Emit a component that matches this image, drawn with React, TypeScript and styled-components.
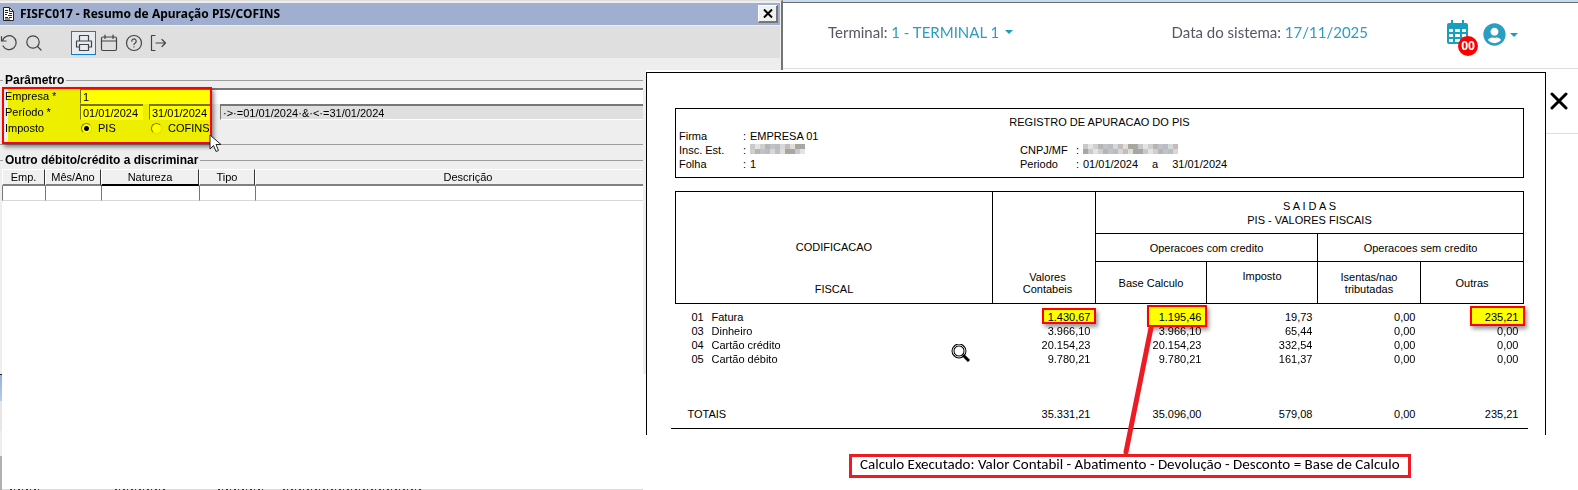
import React from "react";
import styled, { createGlobalStyle } from "styled-components";
import { FaUserCircle } from "react-icons/fa";

const Global = createGlobalStyle`
  *, *::before, *::after { box-sizing: border-box; }
  body { margin: 0; background: #fff; font: 11px/14px "Liberation Sans", Arial, sans-serif; color: #000; }
  button, input { font: inherit; color: inherit; margin: 0; }
  button { padding: 0; border: 0; background: none; cursor: pointer; }
`;

const Desktop = styled.main`
  position: relative;
  display: grid;
  grid-template-columns: minmax(0, 643fr) minmax(0, 140fr) minmax(0, 795fr);
  grid-template-rows: 70px 1fr;
  min-height: 100vh;
  overflow: hidden;
`;

/* Legacy window */
const WindowTop = styled.header`
  grid-column: 1 / 3;
  background: #eee;
  border-top: 1px solid #dedede;
  border-right: 2px solid #747474;
  padding: 2px 1px 0 0;
`;
const TitleBar = styled.div`
  display: flex;
  align-items: center;
  height: 22px;
  padding: 0 2px;
  gap: 5px;
  background: #a0aed0;
`;
const WindowTitle = styled.h1`
  flex: 1;
  margin: 0;
  font: bold 12px/16px "Noto Sans", Tahoma, sans-serif;
`;
const WindowClose = styled.button`
  display: grid;
  place-items: center;
  width: 20px;
  height: 18px;
  background: #f0f0f0;
  border: 1px solid #fff;
  border-right: 2px solid #777;
  border-bottom: 2px solid #777;
`;
const Toolbar = styled.nav`
  display: flex;
  align-items: center;
  height: 32px;
  margin-top: 1px;
  padding-top: 2px;
  background: #dfdfdf;
  overflow: hidden;
`;
const Tool = styled.button<{ $active?: boolean; $spaced?: boolean; $cut?: boolean }>`
  display: grid;
  place-items: center;
  flex: none;
  width: 25px;
  height: 24px;
  margin-left: ${(p) => (p.$spaced ? "25px" : p.$cut ? "-4px" : "0")};
  border: 1px solid ${(p) => (p.$active ? "#0a7fd6" : "transparent")};
  background: ${(p) => (p.$active ? "#e6ecf1" : "none")};
`;
const WindowBody = styled.section`
  position: relative;
  display: flex;
  flex-direction: column;
  background: #eee;
  padding-top: 3px;
`;
const Group = styled.fieldset<{ $closed?: boolean }>`
  min-width: 0;
  margin: 0 0 ${(p) => (p.$closed ? "8px" : "0")};
  padding: 1px 0 ${(p) => (p.$closed ? "8px" : "0")};
  border: 0 solid #9d9d9d;
  border-top-width: 1px;
  border-bottom-width: ${(p) => (p.$closed ? "1px" : "0")};
`;
const Legend = styled.legend`
  margin-left: 3px;
  padding: 0 2px;
  font: bold 12px/14px "Liberation Sans", Arial, sans-serif;
`;
const FieldRow = styled.div`
  display: flex;
  height: 16px;
  padding-left: 5px;
`;
const FieldLabel = styled.label`
  flex: 0 0 75px;
  line-height: 16px;
`;
const TextField = styled.input<{ $date?: boolean; $computed?: boolean }>`
  flex: ${(p) => (p.$date ? "0 0 63px" : "1 1 0")};
  min-width: 0;
  height: 16px;
  margin-right: ${(p) => (p.$date ? "6px" : "0")};
  margin-left: ${(p) => (p.$computed ? "2px" : "0")};
  padding: 0 2px;
  border: 0 solid #777;
  border-top-width: 2px;
  border-left-width: 1px;
  border-bottom: 1px solid #fff;
  outline: 0;
  background: ${(p) => (p.$computed ? "#dfdfdf" : "#fff")};
`;
const Choice = styled.label`
  display: flex;
  align-items: center;
  gap: 6px;
  width: 70px;
`;
const Radio = styled.input`
  appearance: none;
  width: 11px;
  height: 11px;
  margin-left: 1px;
  border: 1px solid #777;
  border-right-color: #ddd;
  border-bottom-color: #ddd;
  border-radius: 50%;
  background: #fff;
  &:checked { background: radial-gradient(circle, #000 2px, #fff 3px); }
`;
const Marker = styled.div`
  position: absolute;
  left: 2px;
  top: 17px;
  width: 210px;
  height: 57px;
  border: 2px solid #f00;
  box-shadow: 2px 3px 4px rgba(0, 0, 0, 0.45);
  pointer-events: none;
  &::before {
    content: "";
    position: absolute;
    inset: 0 0 0 4px;
    background: #ff0;
    mix-blend-mode: multiply;
  }
`;
const GridFrame = styled.div`
  padding: 1px 0 0 2px;
  overflow: hidden;
`;
const EntryGrid = styled.table`
  width: calc(100% + 38px);
  table-layout: fixed;
  border-collapse: separate;
  border-spacing: 0;
  th {
    height: 17px;
    padding: 0;
    font-weight: normal;
    line-height: 14px;
    background: #f0f0f0;
    border-top: 1px solid #fff;
    border-left: 1px solid #fff;
    border-right: 1px solid #333;
    border-bottom: 2px solid #808080;
  }
  th.current { border-bottom-color: #000; }
  td {
    height: 15px;
    padding: 0;
    background: #fff;
    border-left: 1px solid #777;
    border-bottom: 1px solid #d8d8d8;
  }
`;
const Blank = styled.div`
  position: relative;
  flex: 1;
  margin-left: 2px;
  background: #fff;
`;
const BackgroundEdge = styled.div`
  position: absolute;
  left: -2px;
  bottom: 0;
  width: 2px;
  height: 116px;
  background: linear-gradient(#222 0 1px, #92b2dc 1px, #b4cdec 27px, #e6e6e6 27px 57px, #eee 57px 82px, #b0b0b0 82px);
`;
const BottomStrip = styled.svg`
  position: absolute;
  left: 0;
  bottom: 0;
  width: 100%;
  height: 1px;
`;

/* Web system header */
const WebHeader = styled.header`
  display: flex;
  align-items: center;
  height: 69px;
  padding: 0 60px 8px 45px;
  border-top: 3px solid #777;
  border-bottom: 1px solid #dedede;
  border-image: linear-gradient(#c8dbee 0 2px, #6b6f73 2px 3px, #dedede 3px) 3 0 1 0;
  font: 15px/20px Lato, sans-serif;
  color: #555863;
  white-space: nowrap;
  button { color: #2b9dc0; }
`;
const Caret = styled.span`
  display: inline-block;
  margin-left: 6px;
  vertical-align: 4px;
  border: 4px solid transparent;
  border-top-color: #179fc0;
  border-bottom: 0;
`;
const SystemDate = styled.span`
  margin-left: auto;
  margin-right: 79px;
  b { font-weight: normal; color: #2b9dc0; }
`;
const Agenda = styled.button`
  position: relative;
  height: 24px;
  margin-right: 15px;
  svg { display: block; }
`;
const Badge = styled.span`
  position: absolute;
  left: 11px;
  top: 16px;
  width: 20px;
  height: 20px;
  border-radius: 50%;
  background: #f00;
  color: #fff;
  font: bold 12px/19px "Noto Sans", sans-serif;
  text-align: center;
`;
const Account = styled.button`
  display: flex;
  align-items: center;
  padding-top: 6px;
  span { margin-left: 4px; }
`;

/* Report viewer */
const Viewer = styled.section`
  grid-column: 2 / 4;
  display: grid;
  grid-template-columns: minmax(0, 1fr) 32px;
  grid-template-rows: auto 1fr;
  padding-top: 2px;
  background: linear-gradient(#eee, #eee) 0 0 / 3px 304px no-repeat #fff;
`;
const Paper = styled.article`
  position: relative;
  margin-left: 3px;
  padding: 35px 17px 6px 24px;
  border: 1px solid #000;
  border-bottom: 0;
  background: #fff;
`;
const ViewerSide = styled.aside`
  height: 62px;
  padding: 20px 4px;
  border-bottom: 1px solid #dedede;
`;
const Identification = styled.header`
  display: grid;
  grid-template-columns: 64px 7px 270px 56px 7px 1fr;
  height: 70px;
  margin: 0 4px;
  padding: 6px 3px;
  border: 1px solid #000;
  white-space: pre;
`;
const ReportTitle = styled.h2`
  grid-column: 1 / -1;
  margin: 0;
  font: 11px/14px "Liberation Sans", Arial, sans-serif;
  text-align: center;
`;
const CompanyName = styled.span`
  grid-column: 3 / -1;
`;
const Period = styled.span`
  display: flex;
  gap: 14px;
`;
const Sheet = styled.div`
  margin-top: 13px;
  padding: 0 4px 7px;
  border-bottom: 1px solid #000;
`;
const ReportTable = styled.table`
  width: 100%;
  table-layout: fixed;
  border-collapse: collapse;
  th, td { padding: 0; font-weight: normal; }
  thead th { border: 1px solid #000; line-height: 12px; }
  tbody td, tfoot td { position: relative; height: 14px; text-align: right; padding-right: 5px; }
  tbody td:nth-child(-n + 2) { text-align: left; padding: 0; white-space: nowrap; }
  tbody td:first-child { padding-left: 16px; }
  tfoot th { text-align: left; padding-left: 12px; }
`;
const HeadRow = styled.tr<{ $h: number }>`
  height: ${(p) => p.$h}px;
`;
const CodingCell = styled.th`
  vertical-align: top;
`;
const Coding = styled.span`
  display: block;
  padding-top: 48px;
  line-height: 14px;
  & + & { padding-top: 28px; }
`;
const LowLabel = styled.span`
  display: block;
  padding: 70px 0 0 7px;
`;
const Spaced = styled.span`
  display: block;
  line-height: 14px;
`;
const HighLabel = styled.span`
  display: block;
  padding-bottom: 14px;
`;
const Spacer = styled.tr<{ $h: number }>`
  height: ${(p) => p.$h}px;
`;
const Box = styled.span<{ $w: number; $h: number }>`
  position: absolute;
  right: -1px;
  top: calc(50% - ${(p) => p.$h / 2 + 1}px);
  width: ${(p) => p.$w}px;
  height: ${(p) => p.$h}px;
  border: 2px solid #f00;
  box-shadow: 2px 3px 4px rgba(0, 0, 0, 0.4);
  pointer-events: none;
  &::before {
    content: "";
    position: absolute;
    inset: 0;
    background: #ff0;
    mix-blend-mode: multiply;
  }
`;
const Pointer = styled.svg`
  position: absolute;
  left: 209px;
  top: 64px;
`;
const Loupe = styled.svg`
  position: absolute;
  left: 304px;
  top: 271px;
`;
const Connector = styled.svg`
  position: absolute;
  right: 392px;
  top: 250px;
  z-index: 1;
  overflow: visible;
`;
const Callout = styled.p`
  justify-self: start;
  align-self: start;
  grid-column: 1 / 3;
  margin: 19px 0 0 206px;
  padding: 0 8px 4px;
  border: 3px solid #ed1c24;
  font: 15px/14px Carlito, Calibri, Lato, sans-serif;
  white-space: nowrap;
`;

const tints = ["#c9c9c9", "#dcdfd8", "#b9bcc0", "#d2cfca", "#a5a7ab", "#c8b9ba", "#bfc3c9", "#e3e3e6", "#aaa59d", "#d5d8d8", "#b5b5b5"];

function Mosaic({ cells, label }: { cells: number; label: string }) {
  return (
    <svg width={cells * 5} height={12} role="img" aria-label={label}>
      {Array.from({ length: cells * 2 }, (_, i) => {
        const row = Math.floor(i / cells);
        return <rect key={i} x={(i % cells) * 5} y={1 + row * 5} width={5} height={5} fill={tints[(i * 7 + row * 3) % tints.length]} />;
      })}
    </svg>
  );
}

function Icon({ children }: { children: React.ReactNode }) {
  return (
    <svg width="18" height="18" viewBox="0 0 18 18" fill="none" stroke="#444" strokeWidth="1.2" strokeLinecap="round" strokeLinejoin="round">
      {children}
    </svg>
  );
}

const rows: { code: string; name: string; values: string[]; boxes?: Record<number, [number, number]> }[] = [
  { code: "01", name: "Fatura", values: ["1.430,67", "1.195,46", "19,73", "0,00", "235,21"], boxes: { 0: [54, 16], 1: [60, 22], 4: [55, 20] } },
  { code: "03", name: "Dinheiro", values: ["3.966,10", "3.966,10", "65,44", "0,00", "0,00"] },
  { code: "04", name: "Cartão crédito", values: ["20.154,23", "20.154,23", "332,54", "0,00", "0,00"] },
  { code: "05", name: "Cartão débito", values: ["9.780,21", "9.780,21", "161,37", "0,00", "0,00"] },
];
const totals = ["35.331,21", "35.096,00", "579,08", "0,00", "235,21"];
const reportColumns = [36, 281, 103, 111, 111, 103, 103];

export default function App() {
  return (
    <>
      <Global />
      <Desktop>
        <WindowTop>
          <TitleBar>
            <svg width="13" height="16" viewBox="0 0 13 16">
              <path d="M1.500 1.500h6l4 4v9h-10z" fill="#fff" stroke="#222" />
              <path d="M7.500 1.500v4h4M3 4.500h3M3 6.500h3M7 7.500h3M3 8.500h2M6 9.500h4M3 11.500h3M7 11.500h3M3 13h5" stroke="#222" fill="none" />
            </svg>
            <WindowTitle>FISFC017 - Resumo de Apuração PIS/COFINS</WindowTitle>
            <WindowClose aria-label="Fechar">
              <svg width="10" height="9" viewBox="0 0 10 9"><path d="M1 .5l8 8M9 .5l-8 8" stroke="#000" strokeWidth="2" /></svg>
            </WindowClose>
          </TitleBar>
          <Toolbar>
            <Tool $cut aria-label="Desfazer"><Icon><path d="M2.500 6.500A7 7 0 1 1 3 12M1.500 2.500v4.500h4.500" /></Icon></Tool>
            <Tool aria-label="Pesquisar"><Icon><circle cx="8" cy="8" r="6.200" /><path d="M12.500 12.500L16 16" /></Icon></Tool>
            <Tool $spaced $active aria-label="Imprimir"><Icon><path d="M4.500 7V1.500h9V7M4.500 13H1.500V7h15v6h-3M4.500 10.500h9v6h-9z" /></Icon></Tool>
            <Tool aria-label="Calendário"><Icon><rect x="1.500" y="3" width="15" height="13.500" rx="1.500" /><path d="M1.500 7h15M5 1v3.500M13 1v3.500" /></Icon></Tool>
            <Tool aria-label="Ajuda"><Icon><circle cx="9" cy="9" r="7.500" /><path d="M6.800 7.200a2.200 2.200 0 1 1 3.400 1.800q-1.200.7-1.200 1.600M9 12.800v.2" /></Icon></Tool>
            <Tool aria-label="Sair"><Icon><path d="M5 1.500H1.500v15H5M6 9h9.500M12 5.500L15.500 9l-3.500 3.500" /></Icon></Tool>
          </Toolbar>
        </WindowTop>

        <WebHeader>
          <span>Terminal: <button>1 - TERMINAL 1<Caret /></button></span>
          <SystemDate>Data do sistema: <b>17/11/2025</b></SystemDate>
          <Agenda aria-label="Agenda">
            <svg width="21" height="24" viewBox="0 0 21 24" fill="#179fc0">
              <path fillRule="evenodd" d="M4 0h2v3h9V0h2v3h2a2 2 0 0 1 2 2v17a2 2 0 0 1-2 2H2a2 2 0 0 1-2-2V5a2 2 0 0 1 2-2h2zM2 9v3h4V9zM8 9v3h5V9zM15 9v3h4V9zM2 14v3h4v-3zM8 14v3h5v-3zM15 14v3h4v-3zM2 19v3h4v-3zM8 19v3h5v-3zM15 19v3h4v-3z" />
            </svg>
            <Badge>00</Badge>
          </Agenda>
          <Account aria-label="Usuário"><FaUserCircle size={23} /><Caret /></Account>
        </WebHeader>

        <WindowBody>
          <Group $closed>
            <Legend>Parâmetro</Legend>
            <FieldRow>
              <FieldLabel htmlFor="empresa">Empresa *</FieldLabel>
              <TextField id="empresa" defaultValue="1" />
            </FieldRow>
            <FieldRow>
              <FieldLabel htmlFor="inicio">Período *</FieldLabel>
              <TextField $date id="inicio" defaultValue="01/01/2024" />
              <TextField $date aria-label="Fim do período" defaultValue="31/01/2024" />
              <TextField $computed aria-label="Filtro" readOnly value="·&gt;·=01/01/2024·&amp;·&lt;·=31/01/2024" />
            </FieldRow>
            <FieldRow>
              <FieldLabel as="span">Imposto</FieldLabel>
              <Choice><Radio type="radio" name="imposto" defaultChecked />PIS</Choice>
              <Choice><Radio type="radio" name="imposto" />COFINS</Choice>
            </FieldRow>
          </Group>
          <Group>
            <Legend>Outro débito/crédito a discriminar</Legend>
            <GridFrame>
              <EntryGrid>
                <colgroup>
                  <col style={{ width: 43 }} /><col style={{ width: 56 }} /><col style={{ width: 98 }} /><col style={{ width: 56 }} /><col />
                </colgroup>
                <thead>
                  <tr><th>Emp.</th><th>Mês/Ano</th><th className="current">Natureza</th><th>Tipo</th><th>Descrição</th></tr>
                </thead>
                <tbody><tr><td /><td /><td /><td /><td /></tr></tbody>
              </EntryGrid>
            </GridFrame>
          </Group>
          <Blank>
            <BackgroundEdge />
            <BottomStrip>
              <rect width="100%" height="1" fill="#dcdcdc" />
              <path d="M8 .5h32M113 .5h52M216 .5h45M281 .5h140" stroke="#333" strokeDasharray="2 2 1 3" />
            </BottomStrip>
          </Blank>
          <Marker />
          <Pointer width="14" height="20" viewBox="0 0 14 20">
            <path d="M1 1v14l3.500-3.500 2.500 6 2.500-1-2.500-6h5z" fill="#fff" stroke="#222" />
          </Pointer>
        </WindowBody>

        <Viewer>
          <Paper>
            <Identification>
              <ReportTitle>REGISTRO DE APURACAO DO PIS</ReportTitle>
              <span>Firma</span><span>:</span><CompanyName>EMPRESA 01</CompanyName>
              <span>Insc. Est.</span><span>:</span><Mosaic cells={11} label="Inscrição oculta" />
              <span>CNPJ/MF</span><span>:</span><Mosaic cells={19} label="CNPJ oculto" />
              <span>Folha</span><span>:</span><span>1</span>
              <span>Periodo</span><span>:</span><Period><span>01/01/2024</span><span>a</span><span>31/01/2024</span></Period>
            </Identification>
            <Sheet>
              <ReportTable>
                <colgroup>{reportColumns.map((w, i) => <col key={i} style={{ width: `${(w / 848) * 100}%` }} />)}</colgroup>
                <thead>
                  <HeadRow $h={42}>
                    <CodingCell colSpan={2} rowSpan={3}><Coding>CODIFICACAO</Coding><Coding>FISCAL</Coding></CodingCell>
                    <th rowSpan={3}><LowLabel>Valores<br />Contabeis</LowLabel></th>
                    <th colSpan={4}><Spaced>S A I D A S</Spaced><Spaced>PIS - VALORES FISCAIS</Spaced></th>
                  </HeadRow>
                  <HeadRow $h={28}><th colSpan={2}>Operacoes com credito</th><th colSpan={2}>Operacoes sem credito</th></HeadRow>
                  <HeadRow $h={42}>
                    <th>Base Calculo</th><th><HighLabel>Imposto</HighLabel></th><th>Isentas/nao<br />tributadas</th><th>Outras</th>
                  </HeadRow>
                </thead>
                <tbody>
                  <Spacer $h={6} />
                  {rows.map((r) => (
                    <tr key={r.code}>
                      <td>{r.code}</td><td>{r.name}</td>
                      {r.values.map((v, i) => (
                        <td key={i}>{v}{r.boxes?.[i] && <Box $w={r.boxes[i][0]} $h={r.boxes[i][1]} />}</td>
                      ))}
                    </tr>
                  ))}
                  <Spacer $h={41} />
                </tbody>
                <tfoot>
                  <tr><th colSpan={2}>TOTAIS</th>{totals.map((t, i) => <td key={i}>{t}</td>)}</tr>
                </tfoot>
              </ReportTable>
            </Sheet>
            <Loupe width="20" height="18" viewBox="0 0 20 18">
              <circle cx="8" cy="7" r="6" fill="#fff" stroke="#000" strokeWidth="3" />
              <circle cx="8" cy="7" r="6" fill="none" stroke="#fff" strokeWidth="1" />
              <path d="M12 11l6 6" stroke="#000" strokeWidth="3" />
            </Loupe>
            <Connector width="30" height="130" viewBox="0 0 30 130">
              <path d="M28 5L3 129" stroke="#ed1c24" strokeWidth="5" strokeLinecap="round" />
            </Connector>
          </Paper>
          <ViewerSide>
            <button aria-label="Fechar relatório">
              <svg width="18" height="18" viewBox="0 0 18 18"><path d="M2 2l14 14M16 2L2 16" stroke="#000" strokeWidth="3" strokeLinecap="round" /></svg>
            </button>
          </ViewerSide>
          <Callout>Calculo Executado: Valor Contabil - Abatimento - Devolução - Desconto = Base de Calculo</Callout>
        </Viewer>
      </Desktop>
    </>
  );
}
